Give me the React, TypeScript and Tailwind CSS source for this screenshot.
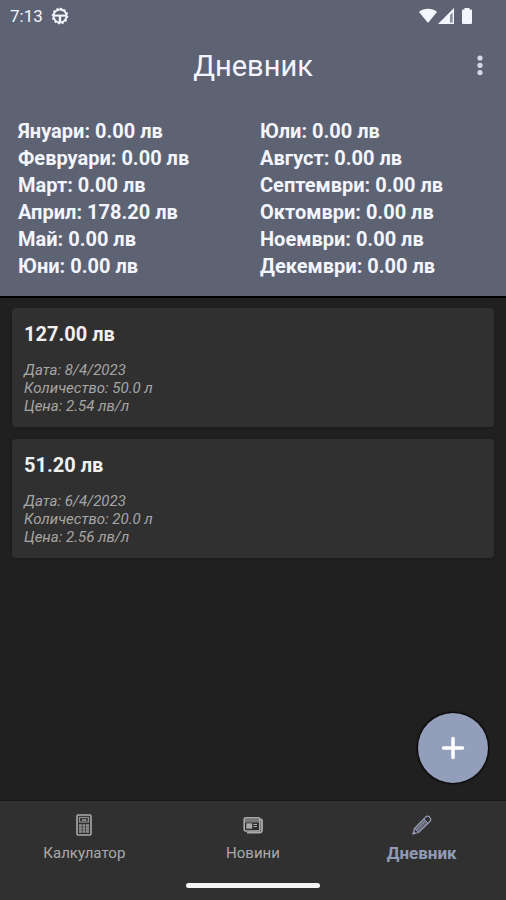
import React from "react"

interface Entry {
  id: number
  total: string
  date: string
  quantity: string
  price: string
}

const months = [
  { name: "Януари", total: "0.00" },
  { name: "Февруари", total: "0.00" },
  { name: "Март", total: "0.00" },
  { name: "Април", total: "178.20" },
  { name: "Май", total: "0.00" },
  { name: "Юни", total: "0.00" },
  { name: "Юли", total: "0.00" },
  { name: "Август", total: "0.00" },
  { name: "Септември", total: "0.00" },
  { name: "Октомври", total: "0.00" },
  { name: "Ноември", total: "0.00" },
  { name: "Декември", total: "0.00" },
]

const entries: Entry[] = [
  { id: 1, total: "127.00", date: "8/4/2023", quantity: "50.0", price: "2.54" },
  { id: 2, total: "51.20", date: "6/4/2023", quantity: "20.0", price: "2.56" },
]

function WheelIcon() {
  return (
    <svg viewBox="0 0 18 18" className="size-[18px]" fill="none" stroke="currentColor" aria-hidden="true">
      <circle cx="9" cy="9" r="7.7" strokeWidth="1.2" strokeDasharray="2 2.03" />
      <circle cx="9" cy="9" r="6.5" strokeWidth="2" />
      <path d="M3 8.600h12" strokeWidth="2" />
      <path d="M9 9v6" strokeWidth="2.400" />
    </svg>
  )
}

function StatusIcons() {
  return (
    <svg viewBox="0 0 56 18" className="h-[18px] w-14" fill="currentColor" aria-hidden="true">
      {/* Wi-Fi */}
      <path d="M1 5C5.500 .6 14.500 .6 19 5L10.600 15.200Q10 15.800 9.400 15.200Z" />
      {/* Signal */}
      <path fillRule="evenodd" d="M36 1V17H20ZM34.600 5.500L32 8.200V15.400H34.600Z" />
      <path d="M32 8.200L34.600 5.500V15.400H32Z" fillOpacity=".3" />
      {/* Battery */}
      <path d="M46.500 1h5v1.500h1.500q1 0 1 1V16q0 1-1 1h-8q-1 0-1-1V3.500q0-1 1-1h1.500Z" />
    </svg>
  )
}

function CalculatorIcon() {
  return (
    <svg viewBox="0 0 16 22" className="h-[22px] w-4" fill="none" stroke="currentColor" aria-hidden="true">
      <rect x="1" y="1" width="14" height="20" rx="1" strokeWidth="1.600" />
      <rect x="3.500" y="3.500" width="9" height="4.500" strokeWidth="1.200" strokeOpacity=".8" />
      <path d="M6 6h4.500" strokeWidth="1.400" />
      <path d="M3 11.500h2.800m.7 0h2.800m.7 0h3M3 14.500h2.800m.7 0h2.800m.7 0h3M3 17.500h2.800m.7 0h2.800m.7 0h3" strokeWidth="2.300" strokeOpacity=".8" />
    </svg>
  )
}

function NewsIcon() {
  return (
    <svg viewBox="0 0 20 18" className="h-[18px] w-5" fill="none" stroke="currentColor" aria-hidden="true">
      <path d="M17 3.500h1q1 0 1 1V14q0 2.500-2.500 2.500H4" strokeWidth="1.800" />
      <rect x="1.200" y="1.700" width="15.600" height="13.300" rx="1.500" strokeWidth="1.600" />
      <path d="M2 4.500h14" strokeWidth="4" strokeOpacity=".6" />
      <rect x="4" y="8" width="4.500" height="4" fill="currentColor" strokeWidth="1.400" />
      <path d="M10.500 8.500H14M10.500 10.500H14" strokeWidth="1.200" />
    </svg>
  )
}

function PencilIcon() {
  return (
    <svg viewBox="0 0 20 20" className="size-5" fill="none" stroke="currentColor" strokeLinejoin="round" aria-hidden="true">
      <path d="M1 19L2.500 13.500L13.500 2.200Q15.500 .2 17.700 2.300Q19.800 4.500 17.800 6.500L6.500 17.500Z" strokeWidth="1.200" />
      <path d="M2.500 13.500L12 4L16 8L6.500 17.500Z" fill="currentColor" fillOpacity=".5" strokeWidth="1" />
      <path d="M4.500 15L13.500 5.500" strokeWidth="1" />
      <path d="M1 19L1.700 16.400L3.600 18.200Z" fill="currentColor" strokeWidth=".8" />
    </svg>
  )
}

const tabs = [
  { label: "Калкулатор", Icon: CalculatorIcon, active: false },
  { label: "Новини", Icon: NewsIcon, active: false },
  { label: "Дневник", Icon: PencilIcon, active: true },
]

function EntryCard({ entry }: { entry: Entry }) {
  return (
    <li className="rounded bg-[#303030] p-3 shadow">
      <h2 className="text-[20px] leading-[29px] font-bold text-[#f0f0f0]">{entry.total} лв</h2>
      <div className="mt-3 text-[15px] leading-[18px] text-[#a6a6a6] italic">
        <p>Дата: {entry.date}</p>
        <p>Количество: {entry.quantity} л</p>
        <p>Цена: {entry.price} лв/л</p>
      </div>
    </li>
  )
}

export default function App() {
  return (
    <div className="flex min-h-screen flex-col bg-[#202020] font-[Roboto,sans-serif]">
      <header className="border-b-2 border-black bg-[#5e6373] text-[#f3f5ff]">
        {/* Status bar */}
        <div className="flex h-8 items-center justify-between pr-8 pl-[10px]">
          <div className="flex items-center gap-2">
            <span className="text-[17px] leading-5">7:13</span>
            <WheelIcon />
          </div>
          <StatusIcons />
        </div>

        {/* Title */}
        <div className="grid h-[68px] grid-cols-[1fr_auto_1fr] items-center px-4">
          <h1 className="col-start-2 text-[29px] leading-9">Дневник</h1>
          <button type="button" aria-label="Меню" className="justify-self-end text-[#d6dae8]">
            <svg viewBox="0 0 20 24" className="h-6 w-5" fill="currentColor" aria-hidden="true">
              <circle cx="10" cy="4" r="2.600" />
              <circle cx="10" cy="11.300" r="2.600" />
              <circle cx="10" cy="18.600" r="2.600" />
            </svg>
          </button>
        </div>

        {/* Monthly totals */}
        <ul className="grid grid-flow-col grid-cols-2 grid-rows-6 gap-x-[14px] px-[18px] pt-[18px] pb-4 text-[20px] leading-[27px] font-bold">
          {months.map((month) => (
            <li key={month.name}>
              {month.name}: {month.total} лв
            </li>
          ))}
        </ul>
      </header>

      <main className="flex-1 px-3 pt-[10px] pb-3">
        <ul className="flex flex-col gap-3">
          {entries.map((entry) => (
            <EntryCard key={entry.id} entry={entry} />
          ))}
        </ul>
      </main>

      <footer className="sticky bottom-0 border-t border-[#181818] bg-[#303030]">
        <button
          type="button"
          aria-label="Добави"
          className="absolute right-[18px] bottom-full mb-[18px] flex size-[70px] items-center justify-center rounded-full bg-[#939fba] text-white shadow-[0_0_2px_1px_#000000]"
        >
          <svg viewBox="0 0 24 24" className="size-6" fill="none" stroke="currentColor" strokeWidth="3.500" strokeLinecap="round" aria-hidden="true">
            <path d="M12 2.500v19M2.500 12h19" />
          </svg>
        </button>

        <nav className="grid h-[82px] grid-cols-3 pt-3">
          {tabs.map(({ label, Icon, active }) => (
            <a
              key={label}
              href="#"
              aria-current={active ? "page" : undefined}
              className={
                active
                  ? "flex flex-col items-center gap-1 text-[17px] leading-6 font-bold text-[#939bb4]"
                  : "flex flex-col items-center gap-1 text-[15px] leading-6 text-[#aaaaaa]"
              }
            >
              <span className="flex h-6 items-center">
                <Icon />
              </span>
              {label}
            </a>
          ))}
        </nav>

        {/* Gesture bar */}
        <div className="flex h-[17px] justify-center">
          <div className="h-[5px] w-[134px] rounded-full bg-[#f4f4f4]" />
        </div>
      </footer>
    </div>
  )
}
